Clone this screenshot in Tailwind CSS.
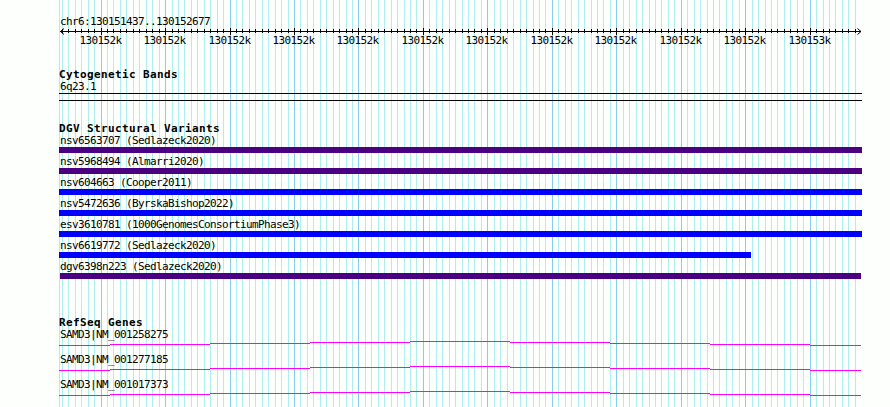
<!DOCTYPE html>
<html lang="en">

<head>
  <meta charset="UTF-8">
  <meta name="viewport" content="width=device-width, initial-scale=1.0">
  <title>chr6:130151437..130152677</title>
  <script src="https://cdn.jsdelivr.net/npm/@tailwindcss/browser@4"></script>
</head>

<body class="bg-[#fdfffc] overflow-hidden">
  <div class="relative w-[890px] h-[407px] overflow-hidden text-black font-['DejaVu_Sans_Mono',monospace] text-[11px] leading-[13px] tracking-[-0.622px] whitespace-nowrap">
    <!-- vertical grid behind all tracks -->
    <svg id="grid" class="absolute inset-0" width="890" height="407" shape-rendering="crispEdges"></svg>

    <main class="relative ml-[59px] w-[803px] pt-[15px]">
      <p class="pl-px">chr6:130151437..130152677</p>
      <svg id="axis" class="block overflow-visible" width="803" height="17" viewBox="59 0 803 17">
        <path d="M60 3.5H861" stroke="black" shape-rendering="crispEdges" />
        <path d="M64 0.5L60.5 3.5L64 6.5M857.5 0.5L861 3.5L857.5 6.5" stroke="black" fill="none" />
      </svg>

      <section class="mt-[23px]">
        <h2 class="font-bold tracking-[0.378px]">Cytogenetic Bands</h2>
        <p class="-mt-px pl-px">6q23.1</p>
        <div class="h-[8px] border-y border-black"></div>
      </section>

      <section class="mt-[21px]">
        <h2 class="font-bold tracking-[0.378px]">DGV Structural Variants</h2>
        <div class="-mt-px">
          <div class="h-[21px]">
            <p class="pl-px">nsv6563707 (Sedlazeck2020)</p>
            <div class="h-[6px] bg-[#4b0082]"></div>
          </div>
          <div class="h-[21px]">
            <p class="pl-px">nsv5968494 (Almarri2020)</p>
            <div class="h-[6px] bg-[#4b0082]"></div>
          </div>
          <div class="h-[21px]">
            <p class="pl-px">nsv604663 (Cooper2011)</p>
            <div class="h-[6px] bg-[#0000ff]"></div>
          </div>
          <div class="h-[21px]">
            <p class="pl-px">nsv5472636 (ByrskaBishop2022)</p>
            <div class="h-[6px] bg-[#0000ff]"></div>
          </div>
          <div class="h-[21px]">
            <p class="pl-px">esv3610781 (1000GenomesConsortiumPhase3)</p>
            <div class="h-[6px] bg-[#0000ff]"></div>
          </div>
          <div class="h-[21px]">
            <p class="pl-px">nsv6619772 (Sedlazeck2020)</p>
            <div class="h-[6px] w-[692px] bg-[#0000ff]"></div>
          </div>
          <div class="h-[21px]">
            <p class="pl-px">dgv6398n223 (Sedlazeck2020)</p>
            <div class="h-[6px] mx-px bg-[#4b0082]"></div>
          </div>
        </div>
      </section>

      <section class="mt-[35px]">
        <h2 class="font-bold tracking-[0.378px]">RefSeq Genes</h2>
        <div class="-mt-px">
          <div class="h-[25px]">
            <p class="pl-px">SAMD3|NM_001258275</p>
            <svg class="intron block" width="803" height="5" viewBox="59 0 803 5" shape-rendering="crispEdges"></svg>
          </div>
          <div class="h-[25px]">
            <p class="pl-px">SAMD3|NM_001277185</p>
            <svg class="intron block" width="803" height="5" viewBox="59 0 803 5" shape-rendering="crispEdges"></svg>
          </div>
          <div class="h-[25px]">
            <p class="pl-px">SAMD3|NM_001017373</p>
            <svg class="intron block" width="803" height="5" viewBox="59 0 803 5" shape-rendering="crispEdges"></svg>
          </div>
        </div>
      </section>
    </main>
  </div>
</body>
<script>
  // 10 bp between ticks, every tenth one is labelled
  var STEP = 6.4464
  var FIRST = 101.1
  var minor = '', major = '', ticks = '', labels = ''

  for (var i = -6; i <= 117; i++) {
    var x = Math.floor(FIRST + i * STEP)
    if (i % 10 === 0) {
      major += `<rect x="${x}" y="0" width="1" height="407"/>`
      ticks += `<rect x="${x}" y="0" width="1" height="7"/>`
      labels += `<text x="${x - 21.5}" y="16">${i === 110 ? '130153k' : '130152k'}</text>`
    } else {
      minor += `<rect x="${x}" y="0" width="1" height="407"/>`
      ticks += `<rect x="${x}" y="1" width="1" height="4"/>`
    }
  }
  minor += '<rect x="59" y="0" width="1" height="407"/>'

  document.getElementById('grid').innerHTML = `<g fill="#afeeee">${minor}</g><g fill="#87ceeb">${major}</g>`
  document.getElementById('axis').innerHTML += `<g shape-rendering="crispEdges">${ticks}</g>${labels}`

  // stepped arc that joins the exons
  var arc = 'M59 4.5H110M110 3.5H210M210 2.5H310M310 1.5H410M410 0.5H510M510 1.5H610M610 2.5H710M710 3.5H810M810 4.5H861'
  document.querySelectorAll('.intron').forEach(function (el) {
    el.innerHTML = `<path d="${arc}" stroke="#ff00ff" fill="none"/>`
  })
</script>

</html>
